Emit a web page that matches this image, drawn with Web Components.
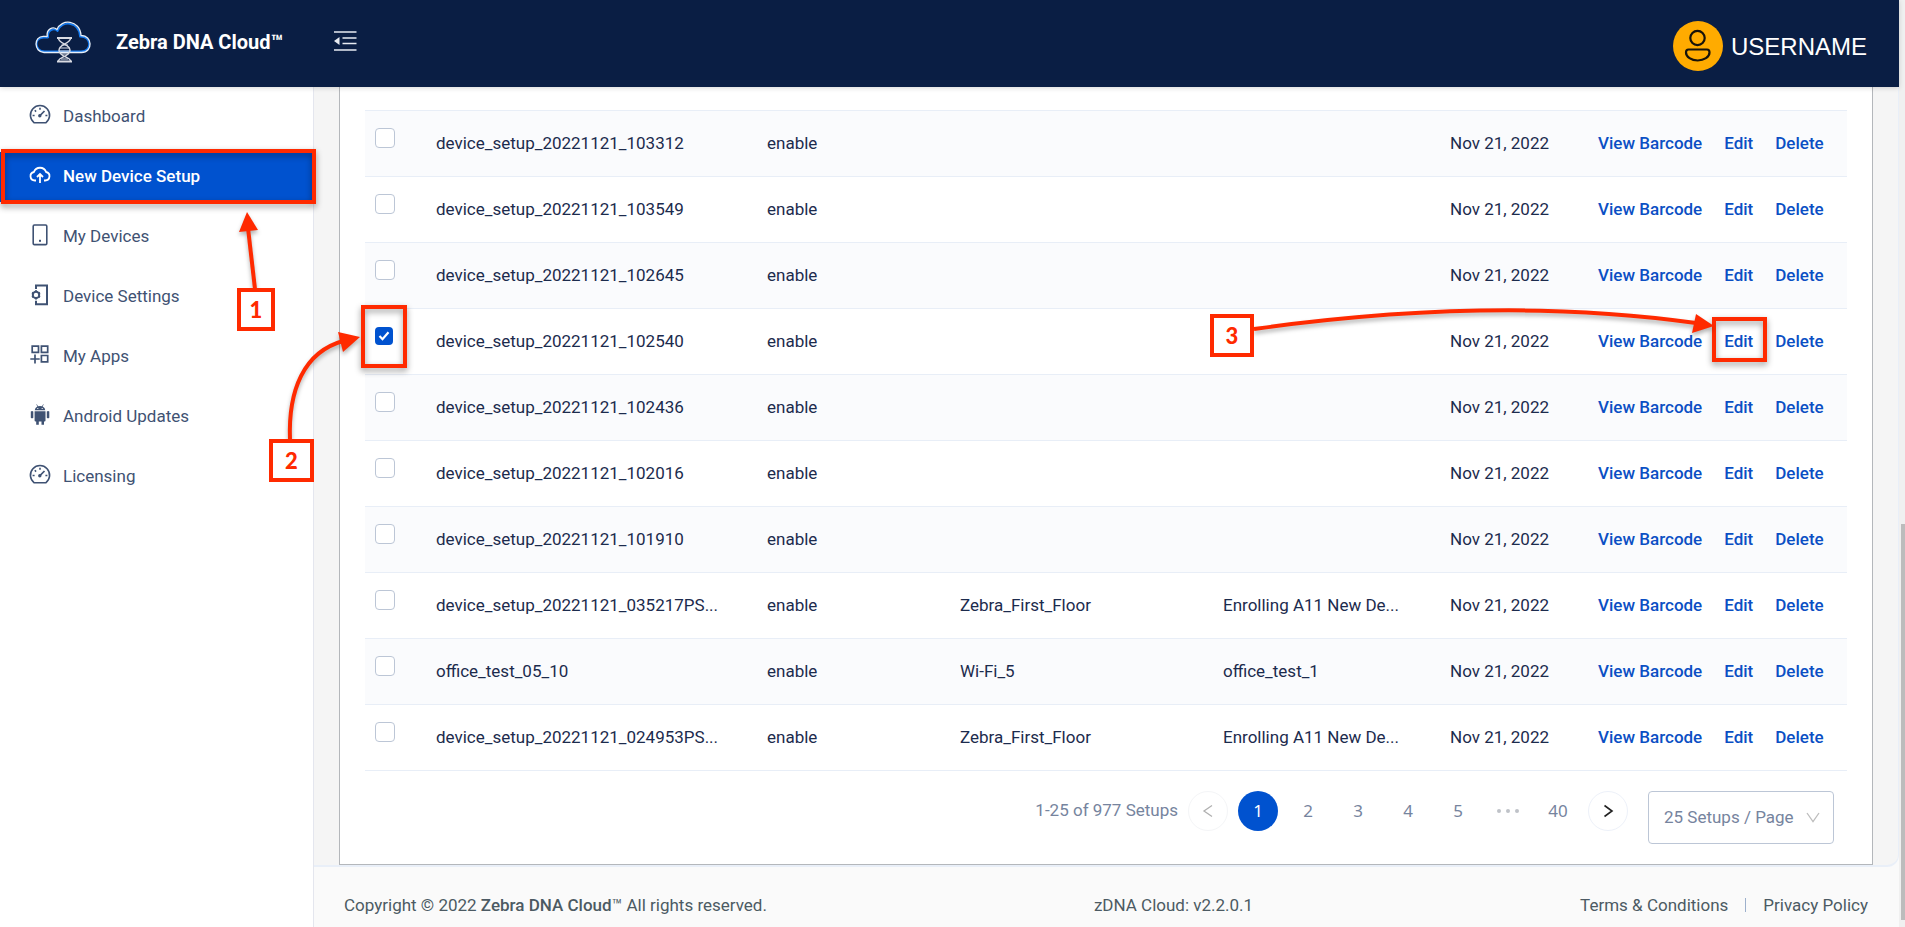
<!DOCTYPE html>
<html lang="en">
<head>
<meta charset="utf-8">
<title>Zebra DNA Cloud</title>
<style>
  html, body { margin: 0; height: 100%; }
  body { font-family: Roboto, "Noto Sans", sans-serif; font-size: 17px; line-height: 24px; background: #f5f5f5; color: #1c2b4d; overflow: hidden; }
</style>
</head>
<body>
<zdna-app></zdna-app>
<script>
const define = (name, html, setup) => {
  const template = document.createElement('template');
  template.innerHTML = html;
  customElements.define(name, class extends HTMLElement {
    constructor() {
      super();
      this.attachShadow({ mode: 'open' }).append(template.content.cloneNode(true));
    }
    connectedCallback() { if (setup) setup(this, this.shadowRoot); }
  });
};

const ICONS = {
  gauge: `<g fill="none" stroke="currentColor" stroke-width="1.6"><path d="M5.200 18.800A9.600 9.600 0 1 1 16.800 18.800z" stroke-linejoin="round"/><path d="M11 11.500l4.500-4.500" stroke-width="1.700"/><path d="M11 3.800v2M3.600 11.500h2M16.400 11.500h2M5.800 6.300l1.300 1.300"/></g><circle cx="10.800" cy="11.800" r="1.700"/>`,
  cloud: `<g fill="none" stroke="currentColor" stroke-width="1.800"><path d="M7 16.500H5.800a4.300 4.300 0 0 1-.9-8.500 6.500 6.500 0 0 1 12.200 0 4.300 4.300 0 0 1-.9 8.500H15"/><path d="M11 19V10.500M8 13l3-3 3 3"/></g>`,
  phone: `<rect x="4.200" y="1" width="13.600" height="19.600" rx="1.200" fill="none" stroke="currentColor" stroke-width="1.600"/><rect x="10" y="15.800" width="2" height="2"/>`,
  settings: `<g fill="none" stroke="currentColor" stroke-width="2"><path d="M7 5V1.500h11v18.800H7v-3.600"/><circle cx="7" cy="10.900" r="3.200"/><path d="M7 6.200v1.500M7 14v1.600M3 8.600l1.300.7M9.700 12.500l1.300.7M3 13.200l1.300-.7M9.700 9.300l1.300-.7"/></g>`,
  apps: `<g fill="none" stroke="currentColor" stroke-width="1.700"><path d="M3.200 2.200h6.300v6.200H3.200zM12.400 2.200h6.300v6.200h-6.300zM12.400 11.500h6.300v6.400h-6.300zM6 10.500v9M1.300 15h9.400"/></g>`,
  android: `<path d="M5.600 7.200h10.900v9.300q0 1-1 1h-.5v3.200h-2.500v-3.200h-2.700v3.200H7.200v-3.200h-.6q-1 0-1-1zM1.800 7.600q1.300-1.100 2.500 0v6.200q-1.200 1-2.500 0zM17.800 7.600q1.300-1.100 2.500 0v6.200q-1.200 1-2.500 0zM5.700 6.200q.3-2.700 2.700-3.700L7.300.4l.5-.2 1.200 2q2-.6 4 0l1.200-2 .5.200-1.100 2.100q2.500 1 2.700 3.700z"/><path d="M8.300 4.100h1v1h-1zM12.700 4.100h1v1h-1z" fill="#fff"/>`
};

define('nav-item', `
<style>
  :host { display: block; }
  a { display: flex; align-items: center; gap: 12px; box-sizing: border-box; height: 50px; padding: 0 29px 2px; color: #3f5273; text-decoration: none; }
  :host([active]) a { background: #0052cf; color: #fff; font-weight: 500; }
  svg { width: 22px; height: 22px; fill: currentColor; margin-bottom: 2px; }
</style>
<a href="#"><svg viewBox="0 0 22 22" aria-hidden="true"></svg><slot></slot></a>`,
(el, root) => { root.querySelector('svg').innerHTML = ICONS[el.getAttribute('icon')]; });

define('side-nav', `
<style>
  :host { display: block; background: #fff; border-right: 1px solid #e4e6ee; padding-top: 5px; }
  nav { display: grid; gap: 10px; }
</style>
<nav aria-label="Main">
  <nav-item icon="gauge">Dashboard</nav-item>
  <nav-item icon="cloud" active>New Device Setup</nav-item>
  <nav-item icon="phone">My Devices</nav-item>
  <nav-item icon="settings">Device Settings</nav-item>
  <nav-item icon="apps">My Apps</nav-item>
  <nav-item icon="android">Android Updates</nav-item>
  <nav-item icon="gauge">Licensing</nav-item>
</nav>`);

define('app-header', `
<style>
  :host { display: flex; align-items: center; height: 87px; background: #0a1e44; color: #fff; box-shadow: 0 1px 5px rgba(0,0,0,.16); z-index: 1; }
  .logo { width: 60px; height: 48px; margin: 0 22px 6px 34px; }
  h1 { margin: 0 50px 4px 0; font-size: 20px; font-weight: 700; line-height: 28px; }
  button { display: flex; padding: 0; border: 0; background: none; color: #e8ebf2; margin-bottom: 6px; }
  .user { display: flex; align-items: center; gap: 8px; margin: 5px 32px 0 auto; font: 24px/28px "Liberation Sans", Arial, sans-serif; }
  .user span { padding-top: 2px; }
</style>
<svg class="logo" viewBox="0 0 60 48" aria-hidden="true">
  <g fill="none" stroke-linejoin="round">
    <path d="M10.500 34.500C0 34 0 20 10 20.500C12 20.500 13.500 21 14.200 20.300C13 13 20 10.500 23.600 14C27.500 3 45 4 46 19.500C57.500 19 58.500 34.500 47 34.500Z" stroke="#1479ee" stroke-width="1.800"/>
    <path d="M10 35.500C-.500 35-.500 19 9.500 19.300C11.500 19.300 12.700 19.800 13.300 19.300C12 12 19 9 23 12.500C27 1.500 46 2.500 47 18.500C58.500 18 59.500 35.500 47.500 35.500Z" stroke="#e6eef8" stroke-width="1.300"/>
    <path d="M23 21h15M23 44.500h15" stroke="#d8dae2" stroke-width="1.800"/>
    <path d="M24.500 21.500C25 27 36.500 27 36 33.500S25 39.500 24.500 44M36.500 21.500C36 27 24.500 27 25 33.500S36 39.500 36.500 44" stroke="#d8dae2" stroke-width="1.400"/>
    <path d="M27.500 28h6.500M25.500 31h10.500M25.500 34h10.500M27 37h7.500M27 42h7" stroke="#d8dae2" stroke-width="1.200"/>
  </g>
</svg>
<h1>Zebra DNA Cloud™</h1>
<button aria-label="Collapse menu"><svg width="24" height="22" viewBox="0 0 24 22" aria-hidden="true"><path d="M1 2h22.500M9.500 8h14M9.500 13.500h14M1 20h22.500" stroke="currentColor" stroke-width="1.700"/><path d="M6.500 7v8L1 11z" fill="currentColor"/></svg></button>
<div class="user">
  <svg width="50" height="50" viewBox="0 0 50 50" aria-hidden="true"><circle cx="25" cy="25" r="25" fill="#ffab00"/><g fill="none" stroke="#17130a" stroke-width="2.200"><circle cx="24.500" cy="17" r="7.200"/><path d="M15.500 28.500H34q2.500 0 2.500 3C36.500 36 31 39.500 24.700 39.500S13 36 13 31.500q0-3 2.500-3z"/></g></svg>
  <span>USERNAME</span>
</div>`);

const EMPTY = ['', ''];
const WIFI = ['Zebra_First_Floor', 'Enrolling A11 New De...'];
const ROWS = [
  ['device_setup_20221121_103312', ...EMPTY],
  ['device_setup_20221121_103549', ...EMPTY],
  ['device_setup_20221121_102645', ...EMPTY],
  ['device_setup_20221121_102540', ...EMPTY, true],
  ['device_setup_20221121_102436', ...EMPTY],
  ['device_setup_20221121_102016', ...EMPTY],
  ['device_setup_20221121_101910', ...EMPTY],
  ['device_setup_20221121_035217PS...', ...WIFI],
  ['office_test_05_10', 'Wi-Fi_5', 'office_test_1'],
  ['device_setup_20221121_024953PS...', ...WIFI]
];

define('setup-table', `
<style>
  :host { display: block; }
  table { width: 100%; table-layout: fixed; border-collapse: separate; border-spacing: 0; border-top: 1px solid #e8eef7; }
  td { box-sizing: border-box; height: 66px; padding: 0 0 2px 16px; border-bottom: 1px solid #e8eef7; white-space: nowrap; }
  td:first-child { padding-left: 10px; }
  tr:nth-child(odd) { background: #fafbfd; }
  .pick { width: 55px; } .state { width: 193px; } .wifi { width: 263px; } .note { width: 227px; } .date { width: 148px; } .acts { width: 265px; }
  input { appearance: none; display: block; box-sizing: border-box; width: 20px; height: 20px; margin: 0 0 9px; border: 1px solid #bcc6d6; border-radius: 4px; background: #fff; }
  input:checked { width: 18px; height: 18px; border: 0; background: #0052cf url('data:image/svg+xml,<svg xmlns="http://www.w3.org/2000/svg" viewBox="0 0 18 18"><path d="M4.500 9l3 3.200 6-7" fill="none" stroke="white" stroke-width="2.200"/></svg>'); }
  .links { display: flex; gap: 22px; }
  a { color: #0b4fc4; font-weight: 500; text-decoration: none; }
</style>
<table>
  <colgroup><col class="pick"><col><col class="state"><col class="wifi"><col class="note"><col class="date"><col class="acts"></colgroup>
  <tbody></tbody>
</table>`,
(el, root) => {
  root.querySelector('tbody').innerHTML = ROWS.map(([name, wifi, note, on]) => `
    <tr><td><input type="checkbox" aria-label="Select ${name}"${on ? ' checked' : ''}></td>
    <td>${name}</td><td>enable</td><td>${wifi}</td><td>${note}</td><td>Nov 21, 2022</td>
    <td><div class="links"><a href="#">View Barcode</a><a href="#">Edit</a><a href="#">Delete</a></div></td></tr>`).join('');
});

define('table-pager', `
<style>
  :host { display: flex; justify-content: flex-end; align-items: flex-start; color: #76849e; padding: 20px 13px 20px 0; }
  .total { line-height: 38px; margin-right: 10px; }
  .pages { display: flex; gap: 10px; margin-right: 20px; }
  button { width: 40px; height: 40px; padding: 0; border: 0; border-radius: 50%; background: none; color: inherit; font: 17px/40px "Noto Sans", sans-serif; }
  button svg { display: block; margin: auto; }
  .prev { border: 1px solid #f4f5f7; color: #b0b0b0; }
  .next { border: 1px solid #edf1f9; color: #222; }
  [aria-current] { background: #0052cf; color: #fff; }
  .gap { display: flex; align-items: center; justify-content: center; gap: 5px; width: 40px; }
  .gap i { width: 4px; height: 4px; border-radius: 50%; background: #bfc2c8; }
  label { position: relative; display: block; }
  select { appearance: none; display: block; width: 186px; height: 53px; padding: 0 15px 2px; border: 1px solid #bcc6d6; border-radius: 4px; background: #fff; color: inherit; font: inherit; }
  label svg { position: absolute; right: 14px; top: 21px; pointer-events: none; }
</style>
<span class="total">1-25 of 977 Setups</span>
<div class="pages">
  <button class="prev" aria-label="Previous page"><svg width="12" height="14" viewBox="0 0 12 14"><path d="M10 1.500L2 7l8 5.500" fill="none" stroke="currentColor" stroke-width="1.300"/></svg></button>
  <button aria-current="page">1</button><button>2</button><button>3</button><button>4</button><button>5</button>
  <span class="gap"><i></i><i></i><i></i></span>
  <button>40</button>
  <button class="next" aria-label="Next page"><svg width="12" height="14" viewBox="0 0 12 14"><path d="M2.500 1.500L10 7l-7.500 5.500" fill="none" stroke="currentColor" stroke-width="1.600"/></svg></button>
</div>
<label><select aria-label="Setups per page"><option>25 Setups / Page</option></select>
<svg width="14" height="11" viewBox="0 0 14 11"><path d="M1 1l6 8.500L13 1" fill="none" stroke="#bdbdbd" stroke-width="1.300"/></svg></label>`);

define('app-footer', `
<style>
  :host { display: flex; justify-content: space-between; align-items: center; padding: 15px 31px 0 30px; color: #4c5a63; background: #fafafa; }
  b { font-weight: 500; }
  .legal { display: flex; gap: 17px; }
  .legal i { width: 1px; height: 14px; background: #9db0cc; align-self: center; }
  a { color: inherit; text-decoration: none; }
</style>
<span>Copyright © 2022 <b>Zebra DNA Cloud</b>™ All rights reserved.</span>
<span>zDNA Cloud: v2.2.0.1</span>
<span class="legal"><a href="#">Terms &amp; Conditions</a><i></i><a href="#">Privacy Policy</a></span>`);

define('step-number', `
<style>
  :host { position: absolute; box-sizing: border-box; display: flex; align-items: center; justify-content: center; border: 4px solid #ff2a00; background: #fff; color: #ff2a00; font: 900 22px/24px Lato, "Noto Sans", sans-serif; }
</style><slot></slot>`);

define('step-frame', `
<style>
  :host { position: absolute; box-sizing: border-box; border: 4px solid #ff2a00; filter: drop-shadow(0 3px 3px rgba(0,0,0,.4)); }
</style>`);

define('guide-layer', `
<style>
  :host { position: absolute; inset: 0; pointer-events: none; overflow: hidden; z-index: 2; }
  svg { position: absolute; top: 0; overflow: visible; filter: drop-shadow(0 3px 2px rgba(0,0,0,.3)); }
  path { fill: none; stroke: #ff2a00; stroke-width: 4; }
  polygon { fill: #ff2a00; }
  .left { left: 0; } .right { right: 0; }
  .setup { left: 1px; top: 149px; width: 315px; height: 55px; }
  .check { left: 361px; top: 305px; width: 46px; height: 63px; }
  .edit { right: 138px; top: 317px; width: 55px; height: 45px; }
  .one { left: 237px; top: 288px; width: 38px; height: 43px; }
  .two { left: 269px; top: 439px; width: 45px; height: 43px; }
  .three { right: 651px; top: 314px; width: 44px; height: 43px; }
</style>
<step-frame class="setup"></step-frame><step-frame class="check"></step-frame><step-frame class="edit"></step-frame>
<svg class="left" width="420" height="500" viewBox="0 0 420 500" aria-hidden="true">
  <path d="M255 289L248 228"/><polygon points="247,212 239,232 258,230"/>
  <path d="M290 440C288 390 304 352 343 341"/><polygon points="360,337 338,332 343,352"/>
</svg>
<svg class="right" width="705" height="500" viewBox="1200 0 705 500" aria-hidden="true">
  <path d="M1254 329Q1500 295 1696 323"/><polygon points="1714,326 1696,314 1692,333"/>
</svg>
<step-number class="one">1</step-number><step-number class="two">2</step-number><step-number class="three">3</step-number>`);

define('zdna-app', `
<style>
  :host { position: relative; display: grid; grid-template-columns: 1fr 6px; min-height: 100vh; }
  .page { display: grid; grid-template: auto 1fr / 314px 1fr; }
  app-header { grid-column: 1 / -1; }
  main { display: flex; flex-direction: column; background: #fafafa; }
  .body { background: #f5f5f5; padding: 0 25px; border-bottom: 2px solid #e9eff8; border-right: 1px solid #e9eff8; border-radius: 0 0 12px 0; }
  .card { background: #fff; border: 1px solid #b4b7bb; border-top: 0; padding: 23px 25px 0; }
  app-footer { flex: 1; }
  .track { display: flex; flex-direction: column; justify-content: flex-end; align-items: flex-end; background: #f0f0f0; padding-bottom: 7px; }
  .thumb { width: 4px; height: 43%; background: #bcbcbc; }
</style>
<div class="page">
  <app-header></app-header>
  <side-nav></side-nav>
  <main>
    <div class="body"><div class="card"><setup-table></setup-table><table-pager></table-pager></div></div>
    <app-footer></app-footer>
  </main>
</div>
<div class="track"><div class="thumb"></div></div>
<guide-layer></guide-layer>`);
</script>
</body>
</html>
